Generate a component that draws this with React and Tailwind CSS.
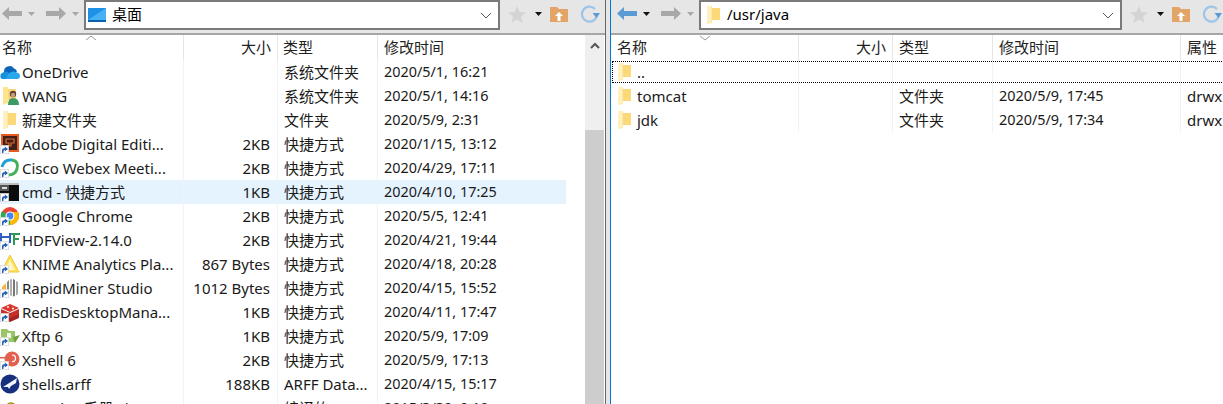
const F = "font-['Noto_Sans','Noto_Sans_CJK_SC',sans-serif]";

function Folder({ className = "" }) {
  return (
    <svg width="16" height="20" viewBox="0 0 16 20" className={className}>
      <path d="M1 1 L6 1 L6 3 L14 3 L14 15 L6 15 L6 18 L1 19 Z" fill="#fde9a6" />
      <path d="M6 3 L14 3 L14 15 L6 15 Z" fill="#fbd878" />
      <path d="M1 1 L5 1 L5 17 L1 19 Z" fill="#fff0bd" />
    </svg>
  );
}

function Shortcut() {
  return (
    <svg width="9" height="9" viewBox="0 0 9 9" className="absolute left-[0px] bottom-[2px]">
      <rect x="0.300" y="0.300" width="8.400" height="8.400" fill="#fff" stroke="#d0d0d0" strokeWidth="0.600" />
      <path d="M2 8 L2 5 Q2 3.200 4 3.200 L4.800 3.200 L4.800 1.500 L8 4 L4.800 6.500 L4.800 4.800 Q3.400 4.800 3.400 8 Z" fill="#1f5fb4" />
    </svg>
  );
}

const icons = {
  onedrive: (
    <svg width="20" height="14" viewBox="0 0 20 14">
      <path d="M4 7 A5.500 5.500 0 0 1 14 3.500 A4 4 0 0 1 17 7 L8 12 Z" fill="#0c64b8" />
      <path d="M1 13.500 Q-1 9 3 7.500 Q6 5.500 9 8 L14 12 L13 14 L3 14 Z" fill="#1490df" />
      <path d="M8 9 Q13 5 16 7.500 Q20 7.500 20 11 Q20 14 17 14 L6 14 Z" fill="#28a8ea" />
    </svg>
  ),
  wang: (
    <svg width="20" height="20" viewBox="0 0 20 20">
      <path d="M3 1 L8 1 L8 17 L3 19 Z" fill="#fde58f" />
      <path d="M8 3 L16 3 L16 14 L8 14 Z" fill="#f9d777" />
      <circle cx="13" cy="8" r="3.200" fill="#5a4030" />
      <circle cx="13" cy="9" r="2.200" fill="#c49a7c" />
      <path d="M8 19 Q8 12 13 12 Q19 12 19 19 Z" fill="#3f9a62" />
    </svg>
  ),
  adobe: (
    <svg width="20" height="20" viewBox="0 0 20 20">
      <rect x="1" y="0" width="18" height="18" fill="#e75a22" />
      <rect x="3" y="2" width="14" height="14" fill="#3c2019" />
      <path d="M6 5 H14 V9 H11 V12 H9 V9 H6 Z" fill="none" stroke="#e06b2c" strokeWidth="1.200" />
    </svg>
  ),
  cisco: (
    <svg width="20" height="20" viewBox="0 0 20 20">
      <path d="M2 9 Q4 1 12 2" fill="none" stroke="#1ea0d5" strokeWidth="3" />
      <path d="M12 2 Q19 3 17 11 Q15 17 8 17" fill="none" stroke="#44b05c" strokeWidth="3" />
      <circle cx="10" cy="10" r="4" fill="#fff" />
    </svg>
  ),
  cmd: (
    <svg width="20" height="18" viewBox="0 0 20 18">
      <rect x="0" y="0" width="19" height="18" fill="#0c0c0c" />
      <rect x="0" y="0" width="19" height="2" fill="#bdbdbd" />
      <rect x="0" y="2" width="9" height="6" fill="#555" />
      <rect x="2" y="4" width="5" height="2" fill="#ddd" />
    </svg>
  ),
  chrome: (
    <svg width="20" height="20" viewBox="0 0 20 20">
      <circle cx="10" cy="10" r="9" fill="#ea4335" />
      <path d="M10 10 L2.200 14.500 A9 9 0 0 0 10 19 Z M10 10 L2 5 A9 9 0 0 0 2.200 14.500 Z" fill="#34a853" />
      <path d="M10 6 H18 A9 9 0 0 1 10 19 Z" fill="#fbbc05" />
      <circle cx="10" cy="10" r="4.500" fill="#fff" />
      <circle cx="10" cy="10" r="3.400" fill="#4285f4" />
    </svg>
  ),
  hdf: (
    <svg width="20" height="18" viewBox="0 0 20 18">
      <path d="M1 2 V12 M1 6 H10 M10 2 V12" stroke="#2f5fc0" strokeWidth="2" fill="none" />
      <path d="M11 3 H20 M14 3 V14 M14 8 H19" stroke="#2b9a58" strokeWidth="2" fill="none" />
    </svg>
  ),
  knime: (
    <svg width="20" height="20" viewBox="0 0 20 20">
      <path d="M10 1 L19 18 H1 Z" fill="#fde25c" stroke="#f0c63a" strokeWidth="1" />
      <path d="M10 6 L15 16 H5 Z" fill="#fff6c2" />
    </svg>
  ),
  rapid: (
    <svg width="20" height="20" viewBox="0 0 20 20">
      <path d="M2 9 L6 5 V15 L2 13 Z" fill="#f4b73b" />
      <path d="M7 4 L9 2 V17 L7 16 Z" fill="#888" />
      <path d="M10 1.500 L12 1 V18 L10 17.500 Z" fill="#b0b0b0" />
      <path d="M13 1 L15 2 V18 L13 18.500 Z" fill="#777" />
      <path d="M16 3 L18 4 V16 L16 17.500 Z" fill="#a8a8a8" />
    </svg>
  ),
  redis: (
    <svg width="20" height="19" viewBox="0 0 20 19">
      <path d="M1 10 L10 14 L19 10 V15 L10 19 L1 15 Z" fill="#a32422" />
      <path d="M1 6 L10 10 L19 6 V11 L10 15 L1 11 Z" fill="#c6302b" />
      <path d="M1 5 L10 1 L19 5 L10 9 Z" fill="#dc382c" />
      <circle cx="8" cy="4" r="1" fill="#fff" />
      <circle cx="13" cy="5.500" r="1" fill="#fff" />
    </svg>
  ),
  xftp: (
    <svg width="20" height="18" viewBox="0 0 20 18">
      <path d="M1 2 H7 L9 4 H15 V15 H1 Z" fill="#9cc46a" />
      <path d="M7 6 H11 V11 H7 Z" fill="#f3f8ea" />
      <path d="M13 10 L20 8 L15 16 Z" fill="#6da03c" />
    </svg>
  ),
  xshell: (
    <svg width="20" height="18" viewBox="0 0 20 18">
      <circle cx="12" cy="8" r="7.500" fill="#e4604e" />
      <path d="M12 4 Q16 4 15.500 8 Q15 11 12 10.500" fill="none" stroke="#fff" strokeWidth="1.200" />
      <rect x="0" y="6" width="7" height="1.500" fill="#e4604e" />
    </svg>
  ),
  arff: (
    <svg width="20" height="20" viewBox="0 0 20 20">
      <circle cx="10" cy="10" r="9.500" fill="#17307e" />
      <path d="M3 13 L14 6 L17 4 L16 9 L11 12 L9 15 L8 13 Z" fill="#f2f5ff" />
    </svg>
  ),
  wps: (
    <svg width="20" height="20" viewBox="0 0 20 20">
      <circle cx="11" cy="10" r="5" fill="#fff2a8" stroke="#a88a10" strokeWidth="1.600" />
    </svg>
  ),
};

function FileIcon({ name, shortcut }) {
  return (
    <span className="relative flex h-[24px] w-[21px] shrink-0 items-center justify-start">
      {name === "folder" ? <Folder className="ml-[2px]" /> : icons[name]}
      {shortcut && <Shortcut />}
    </span>
  );
}

const leftRows = [
  ["onedrive", "OneDrive", "", "系统文件夹", "2020/5/1, 16:21"],
  ["wang", "WANG", "", "系统文件夹", "2020/5/1, 14:16"],
  ["folder", "新建文件夹", "", "文件夹", "2020/5/9, 2:31"],
  ["adobe", "Adobe Digital Editi...", "2KB", "快捷方式", "2020/1/15, 13:12", 1],
  ["cisco", "Cisco Webex Meeti...", "2KB", "快捷方式", "2020/4/29, 17:11", 1],
  ["cmd", "cmd - 快捷方式", "1KB", "快捷方式", "2020/4/10, 17:25", 1],
  ["chrome", "Google Chrome", "2KB", "快捷方式", "2020/5/5, 12:41", 1],
  ["hdf", "HDFView-2.14.0", "2KB", "快捷方式", "2020/4/21, 19:44", 1],
  ["knime", "KNIME Analytics Pla...", "867 Bytes", "快捷方式", "2020/4/18, 20:28", 1],
  ["rapid", "RapidMiner Studio", "1012 Bytes", "快捷方式", "2020/4/15, 15:52", 1],
  ["redis", "RedisDesktopMana...", "1KB", "快捷方式", "2020/4/11, 17:47", 1],
  ["xftp", "Xftp 6", "1KB", "快捷方式", "2020/5/9, 17:09", 1],
  ["xshell", "Xshell 6", "2KB", "快捷方式", "2020/5/9, 17:13", 1],
  ["arff", "shells.arff", "188KB", "ARFF Data...", "2020/4/15, 15:17"],
  ["wps", "W32chm手册.chm", "12.95MB", "编译的 HT...", "2015/3/30, 9:10"],
];

const Arrow = ({ dir, color }) => (
  <svg width="20" height="13" viewBox="0 0 20 13">
    <path
      d={dir === "left" ? "M0 6.500 L7 0 V4 H20 V9 H7 V13 Z" : "M20 6.500 L13 0 V4 H0 V9 H13 V13 Z"}
      fill={color}
    />
  </svg>
);

const Caret = ({ color }) => (
  <svg width="7" height="4" viewBox="0 0 7 4" className="block">
    <path d="M0 0 H7 L3.500 4 Z" fill={color} />
  </svg>
);

function Toolbar({ right }) {
  return (
    <div className="box-content flex h-[33px] shrink-0 items-center border-b-2 border-[#a6a6a6] bg-[#e6e6e6]">
      <div className={`-mt-[6px] flex items-center ${right ? "w-[88px] pl-[6px]" : "w-[84px] pl-[2px]"}`}>
        <Arrow dir="left" color={right ? "#5b9bd5" : "#a8a8a8"} />
        <span className="ml-[6px]">
          <Caret color={right ? "#111" : "#a8a8a8"} />
        </span>
        <span className="ml-[11px]">
          <Arrow dir="right" color="#a8a8a8" />
        </span>
        <span className="ml-[6px]">
          <Caret color="#a8a8a8" />
        </span>
      </div>
      <div className={`-mt-[3px] flex h-[30px] items-center border-2 border-[#7a7a7a] bg-white ${right ? "w-[423px]" : "w-[416px]"}`}>
        <span className="ml-[2px] flex w-[24px] items-center">
          {right ? (
            <Folder className="ml-[3px]" />
          ) : (
            <svg width="18" height="14" viewBox="0 0 18 14">
              <rect width="18" height="14" fill="#1e90e6" />
              <path d="M0 12 L18 0 V12 Z" fill="#46b1f5" />
              <rect y="12" width="18" height="2" fill="#0a5fae" />
            </svg>
          )}
        </span>
        <span className={`${F} -mt-[2px] flex-1 text-[15px] text-black`}>{right ? "/usr/java" : "桌面"}</span>
        <svg width="12" height="7" viewBox="0 0 12 7" className="mr-[6px]">
          <path d="M1 1 L6 6 L11 1" fill="none" stroke="#555" strokeWidth="1" />
        </svg>
      </div>
      <div className="-mt-[5px] ml-[8px] flex items-center">
        <svg width="18" height="17" viewBox="0 0 18 17">
          <path d="M9 0 L11.500 6 L18 6.500 L13 10.500 L14.500 17 L9 13.500 L3.500 17 L5 10.500 L0 6.500 L6.500 6 Z" fill="#d4d4d4" />
        </svg>
        <span className="ml-[9px]">
          <Caret color="#111" />
        </span>
        <svg width="18" height="16" viewBox="0 0 18 16" className="ml-[8px]">
          <path d="M0 1 H7 L9 3 H18 V16 H0 Z" fill="#e3a468" />
          <path d="M9 6 L13 10 H10.500 V15 H7.500 V10 H5 Z" fill="#fff" />
        </svg>
        <svg width="21" height="20" viewBox="0 0 21 20" className="ml-[11px]">
          <path d="M16 5 A7.500 7.500 0 1 0 18 10" fill="none" stroke="#9cc5e8" strokeWidth="2.200" />
          <path d="M13.500 9 H21 L17.500 14 Z" fill="#5b9bd5" />
        </svg>
      </div>
    </div>
  );
}

function Header({ right }) {
  const cell = "h-full flex items-center border-r border-[#e6e6e6]";
  return (
    <div className={`${F} relative flex h-[25px] shrink-0 items-center text-[15px] text-[#222]`}>
      <svg width="12" height="6" viewBox="0 0 12 6" className={`absolute top-0 ${right ? "left-[88px]" : "left-[85px]"}`}>
        <path d={right ? "M1 1 L6 5 L11 1" : "M1 5 L6 1 L11 5"} fill="none" stroke="#999" strokeWidth="1" />
      </svg>
      <div className={`${cell} ${right ? "w-[188px] pl-[6px]" : "w-[184px] pl-[2px]"}`}>名称</div>
      <div className={`${cell} w-[94px] justify-end pr-[6px]`}>大小</div>
      <div className={`${cell} w-[100px] ${right ? "pl-[6px]" : "pl-[5px]"}`}>类型</div>
      <div className={`${cell} ${right ? "w-[188px]" : "w-[188px] border-r-0"} pl-[6px]`}>修改时间</div>
      {right && <div className="whitespace-nowrap pl-[6px]">属性</div>}
    </div>
  );
}

function Row({ icon, name, size, type, time, shortcut, selected }) {
  return (
    <div className={`${F} flex h-[24px] w-[566px] shrink-0 items-center text-[15px] text-[#1a1a1a] ${selected ? "bg-[#e5f3ff]" : ""}`}>
      <div className="flex h-full w-[184px] items-center border-r border-[#eef3f8]">
        <FileIcon name={icon} shortcut={shortcut} />
        <span className="whitespace-nowrap pl-[1px]">{name}</span>
      </div>
      <div className="flex h-full w-[94px] items-center justify-end whitespace-nowrap border-r border-[#eef3f8] pr-[7px]">{size}</div>
      <div className="flex h-full w-[100px] items-center whitespace-nowrap border-r border-[#eef3f8] pl-[6px]">{type}</div>
      <div className="flex h-full items-center whitespace-nowrap pl-[6px] text-[14.4px]">{time}</div>
    </div>
  );
}

function RightRow({ name, time, focus }) {
  const line = "h-full border-r border-[#eef3f8]";
  return (
    <div className={`${F} flex h-[24px] w-[620px] shrink-0 items-center text-[15px] text-[#1a1a1a] ${focus ? "outline-1 -outline-offset-2 outline-dotted outline-black" : ""}`}>
      <div className={`${line} flex w-[188px] items-center`}>
        <span className="flex w-[26px] justify-start pl-[6px]">
          <Folder />
        </span>
        <span>{name}</span>
      </div>
      <div className={`${line} w-[94px]`} />
      <div className={`${line} flex w-[100px] items-center pl-[6px]`}>{focus ? "" : "文件夹"}</div>
      <div className={`${line} flex w-[188px] items-center whitespace-nowrap pl-[6px] text-[14.4px]`}>{time}</div>
      <div className="pl-[6px]">{focus ? "" : "drwx"}</div>
    </div>
  );
}

export default function App() {
  return (
    <div className="flex h-[404px] w-[1223px] overflow-hidden bg-white">
      <div className="flex w-[605px] shrink-0 flex-col overflow-hidden">
        <Toolbar />
        <div className="flex min-h-0 flex-1">
          <div className="flex w-[585px] flex-col overflow-hidden">
            <Header />
            {leftRows.map((r, i) => (
              <Row key={i} icon={r[0]} name={r[1]} size={r[2]} type={r[3]} time={r[4]} shortcut={!!r[5]} selected={i === 5} />
            ))}
          </div>
          <div className="flex w-[19px] flex-col bg-[#efefef]">
            <div className="flex h-[20px] items-center justify-center">
              <svg width="10" height="7" viewBox="0 0 10 7">
                <path d="M1 6 L5 2 L9 6" fill="none" stroke="#555" strokeWidth="2" />
              </svg>
            </div>
            <div className="h-[75px]" />
            <div className="flex-1 bg-[#cdcdcd]" />
          </div>
        </div>
      </div>
      <div className="w-[1px] bg-[#666]" />
      <div className="w-[4px] bg-[#e6e6e6]" />
      <div className="w-[1px] bg-[#0078d7]" />
      <div className="flex min-w-0 flex-1 flex-col overflow-hidden">
        <Toolbar right />
        <Header right />
        <RightRow name=".." time="" focus />
        <RightRow name="tomcat" time="2020/5/9, 17:45" />
        <RightRow name="jdk" time="2020/5/9, 17:34" />
      </div>
    </div>
  );
}
